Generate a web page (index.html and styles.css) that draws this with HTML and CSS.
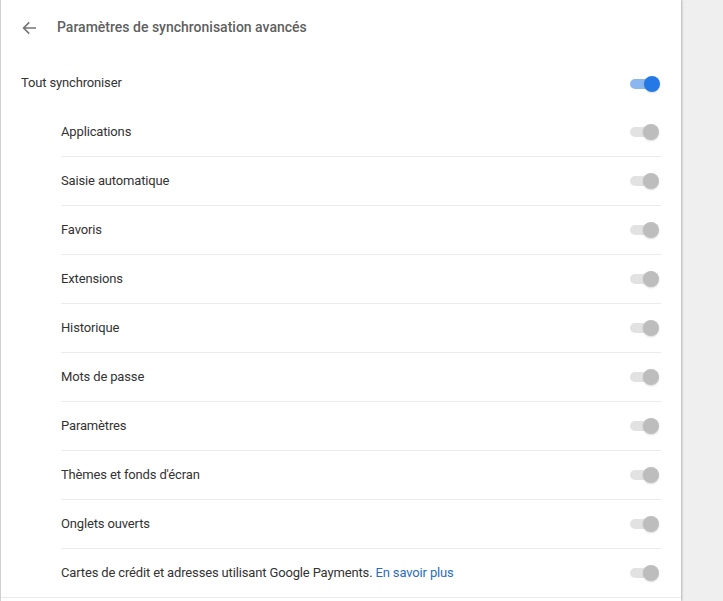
FILE: index.html
```html
<!DOCTYPE html>
<html>
<head>
    <meta charset="utf-8">
    <title>Paramètres de synchronisation avancés</title>
    <link rel="stylesheet" href="styles.css">
</head>
<body>
<div class="card">
    <div class="header">
        <svg class="back" width="16" height="16" viewBox="0 0 16 16">
            <path d="M15 8H2.8M8.2 2.4L2.6 8l5.6 5.6" fill="none" stroke="#757575" stroke-width="1.6"/>
        </svg>
        <h2>Paramètres de synchronisation avancés</h2>
    </div>
    <div class="row main">
        <span>Tout synchroniser</span>
        <span class="toggle on"><i></i></span>
    </div>
    <div class="list">
        <div class="row"><span>Applications</span><span class="toggle"><i></i></span></div>
        <div class="row"><span>Saisie automatique</span><span class="toggle"><i></i></span></div>
        <div class="row"><span>Favoris</span><span class="toggle"><i></i></span></div>
        <div class="row"><span>Extensions</span><span class="toggle"><i></i></span></div>
        <div class="row"><span>Historique</span><span class="toggle"><i></i></span></div>
        <div class="row"><span>Mots de passe</span><span class="toggle"><i></i></span></div>
        <div class="row"><span>Paramètres</span><span class="toggle"><i></i></span></div>
        <div class="row"><span>Thèmes et fonds d'écran</span><span class="toggle"><i></i></span></div>
        <div class="row"><span>Onglets ouverts</span><span class="toggle"><i></i></span></div>
        <div class="row last"><span>Cartes de crédit et adresses utilisant Google Payments. <a href="#">En savoir plus</a></span><span class="toggle"><i></i></span></div>
    </div>
    <div class="foot"></div>
</div>
</body>
</html>
```

FILE: styles.css
```css
html, body {
    margin: 0;
    padding: 0;
    overflow: hidden;
}

body {
    background: #efefef;
    color: #333;
    font: 13px/1.4 Roboto, "Liberation Sans", sans-serif;
    letter-spacing: -0.15px;
    height: 601px;
}

.card {
    width: 680px;
    height: 601px;
    background: #fff;
    border-left: 1px solid #d0d0d0;
    box-shadow: 1px 0 2px rgba(0, 0, 0, .25);
}

.header {
    height: 56px;
    display: flex;
    align-items: center;
    padding-left: 20px;
}

.header .back {
    margin-right: 20px;
}

.header h2 {
    margin: 0;
    font-size: 14px;
    font-weight: 500;
    letter-spacing: 0;
    color: #5f5f5f;
}

.row {
    display: flex;
    align-items: center;
    justify-content: space-between;
}

.row.main {
    height: 49px;
    padding: 3px 21px 0 20px;
}

.list {
    padding-left: 60px;
}

.list .row {
    height: 48px;
    border-bottom: 1px solid #ebebeb;
    margin-right: 20px;
    padding-right: 1px;
}

.list .row.last {
    border-bottom: none;
}

.foot {
    border-top: 1px solid #ebebeb;
}

a {
    color: #2a6cc4;
    text-decoration: none;
}

.toggle {
    position: relative;
    width: 30px;
    height: 16px;
    flex: none;
}

.toggle::before {
    content: "";
    position: absolute;
    left: 0;
    top: 3px;
    width: 26px;
    height: 10px;
    border-radius: 5px;
    background: #e2e2e2;
}

.toggle i {
    position: absolute;
    right: 1px;
    top: 0;
    width: 16px;
    height: 16px;
    border-radius: 50%;
    background: #bdbdbd;
    box-shadow: 0 1px 2px rgba(0, 0, 0, .15);
}

.toggle.on::before {
    background: #8bb7f0;
}

.toggle.on i {
    right: 0;
    background: #2479e4;
}
```
